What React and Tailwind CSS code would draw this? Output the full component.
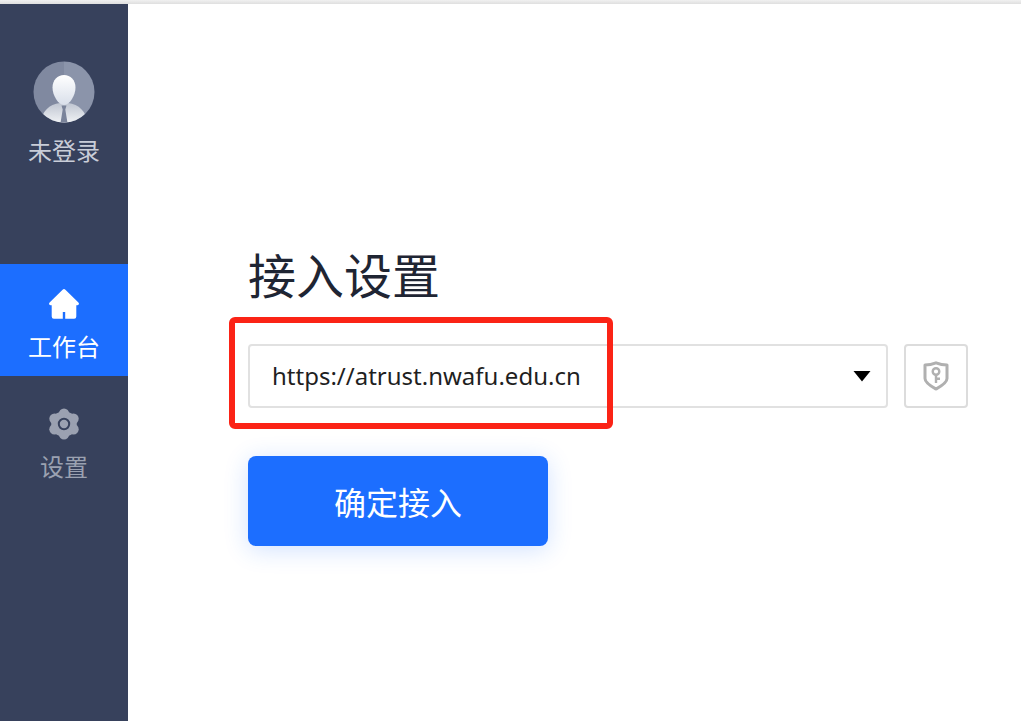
import { useState } from 'react'

const servers = ['https://atrust.nwafu.edu.cn']

function Avatar() {
  return (
    <svg className="w-[62px] h-[62px]" viewBox="0 0 62 62" aria-hidden="true">
      <defs>
        <clipPath id="avatar-clip">
          <circle cx="31" cy="31" r="30.5" />
        </clipPath>
        <linearGradient id="avatar-head" x1="0" y1="0" x2="0" y2="1">
          <stop offset="0" stopColor="#ffffff" />
          <stop offset="1" stopColor="#d9dfea" />
        </linearGradient>
        <linearGradient id="avatar-body" x1="0" y1="0" x2="0" y2="1">
          <stop offset="0" stopColor="#bfc5d1" />
          <stop offset="1" stopColor="#f0f2f5" />
        </linearGradient>
      </defs>
      <g clipPath="url(#avatar-clip)">
        <rect width="31" height="62" fill="#8089a0" />
        <rect x="31" width="31" height="62" fill="#8b94aa" />
        <path d="M7 62C9 51 16 43 27 42h8c11 1 18 9 20 20z" fill="url(#avatar-body)" />
        <path d="M28.500 44.500h5L32.300 48.500 34.500 62h-7l2.200-13.500z" fill="#7a839a" />
        <path d="M31 14c6.500 0 11.500 5 11.500 12.500C42.500 34 37 44 31 44S19.500 34 19.500 26.500C19.500 19 24.500 14 31 14z" fill="url(#avatar-head)" />
      </g>
    </svg>
  )
}

function HomeIcon() {
  return (
    <svg className="w-8 h-8" viewBox="0 0 32 32" fill="currentColor" aria-hidden="true">
      <path d="M14.600 1.700a2 2 0 0 1 2.800 0L30.400 14.600c1.200 1.200.5 2.600-.9 2.600H28.300V28.500a2.200 2.200 0 0 1-2.200 2.200H17.200V24h-2.400v6.700H5.900a2.200 2.200 0 0 1-2.200-2.200V17.200H2.500c-1.400 0-2.100-1.400-.9-2.600z" />
    </svg>
  )
}

function GearIcon() {
  return (
    <svg className="w-8 h-8" viewBox="0 0 32 32" aria-hidden="true">
      <g fill="currentColor">
        <circle cx="16" cy="16" r="12.800" />
        <circle cx="16" cy="5.800" r="5.200" />
        <circle cx="25.500" cy="10.800" r="5.200" />
        <circle cx="25.500" cy="21.200" r="5.200" />
        <circle cx="16" cy="26.200" r="5.200" />
        <circle cx="6.500" cy="21.200" r="5.200" />
        <circle cx="6.500" cy="10.800" r="5.200" />
      </g>
      <circle cx="16" cy="16" r="5.200" fill="none" stroke="#37415c" strokeWidth="2" />
    </svg>
  )
}

function ShieldKeyIcon() {
  return (
    <svg className="w-8 h-8" viewBox="0 0 32 32" fill="none" stroke="#b0b0b0" aria-hidden="true">
      <path d="M16 2.800C19.500 4.200 23.500 5 27 5v13.500C27 23 20.500 26.500 16 29 11.500 26.500 5 23 5 18.500V5c3.500 0 7.500-.8 11-2.200z" strokeWidth="3" strokeLinejoin="round" />
      <circle cx="16" cy="11.500" r="3.300" strokeWidth="2.400" />
      <path d="M16 15v8M16 18.800h4" strokeWidth="2.400" />
    </svg>
  )
}

const navItems = [
  { key: 'workbench', label: '工作台', icon: HomeIcon },
  { key: 'settings', label: '设置', icon: GearIcon },
]

function Sidebar({ active, onSelect }) {
  return (
    <aside className="w-32 shrink-0 bg-[#37415c]">
      <div className="flex flex-col items-center gap-2 pt-[57px] pb-[93px]">
        <Avatar />
        <span className="text-2xl leading-10 text-[#c9cdd8]">未登录</span>
      </div>
      <nav className="flex flex-col gap-2">
        {navItems.map(({ key, label, icon: Icon }) => (
          <button
            key={key}
            type="button"
            onClick={() => onSelect(key)}
            className={`flex h-28 w-full flex-col items-center gap-2 pt-6 text-2xl leading-[38px] ${
              active === key ? 'bg-[#1c6eff] text-white' : 'text-[#9ba1b1]'
            }`}
          >
            <Icon />
            <span>{label}</span>
          </button>
        ))}
      </nav>
    </aside>
  )
}

export default function App() {
  const [active, setActive] = useState('workbench')
  const [server, setServer] = useState(servers[0])

  return (
    <div className="flex min-h-screen flex-col bg-white font-['Noto_Sans','Noto_Sans_CJK_SC',sans-serif]">
      <div className="h-1 bg-linear-to-b from-[#f1f1f1] to-[#dfdfdf]" />
      <div className="flex flex-1">
        <Sidebar active={active} onSelect={setActive} />

        <main className="flex-1 pt-[236px] pr-[53px] pl-[120px]">
          <h1 className="text-5xl leading-[72px] text-[#1f2533]">接入设置</h1>

          <form onSubmit={(e) => e.preventDefault()}>
            <div className="relative mt-8 flex gap-4">
              <div className="relative flex-1">
                <select
                  aria-label="接入地址"
                  value={server}
                  onChange={(e) => setServer(e.target.value)}
                  className="h-16 w-full appearance-none rounded-sm border-2 border-[#e1e1e1] bg-white pr-12 pl-[22px] text-2xl text-[#1f1f1f] outline-none"
                >
                  {servers.map((s) => (
                    <option key={s}>{s}</option>
                  ))}
                </select>
                <svg className="pointer-events-none absolute top-[26px] right-4 h-3 w-5" viewBox="0 0 20 12" aria-hidden="true">
                  <path d="M1.500 1h17L10 11.500z" />
                </svg>
              </div>
              <button
                type="button"
                aria-label="安全码"
                className="flex h-16 w-16 items-center justify-center rounded-sm border-2 border-[#dcdcdc] bg-white"
              >
                <ShieldKeyIcon />
              </button>
              {/* 地址高亮框 */}
              <div className="pointer-events-none absolute -top-[27px] -left-[19px] h-28 w-96 rounded-md border-6 border-[#fb2316]" />
            </div>

            <button
              type="submit"
              className="mt-12 h-[90px] w-[300px] rounded-lg bg-[#1c6eff] pt-1 text-[32px] text-white shadow-[0_4px_24px_rgba(28,110,255,0.2)]"
            >
              确定接入
            </button>
          </form>
        </main>
      </div>
    </div>
  )
}
